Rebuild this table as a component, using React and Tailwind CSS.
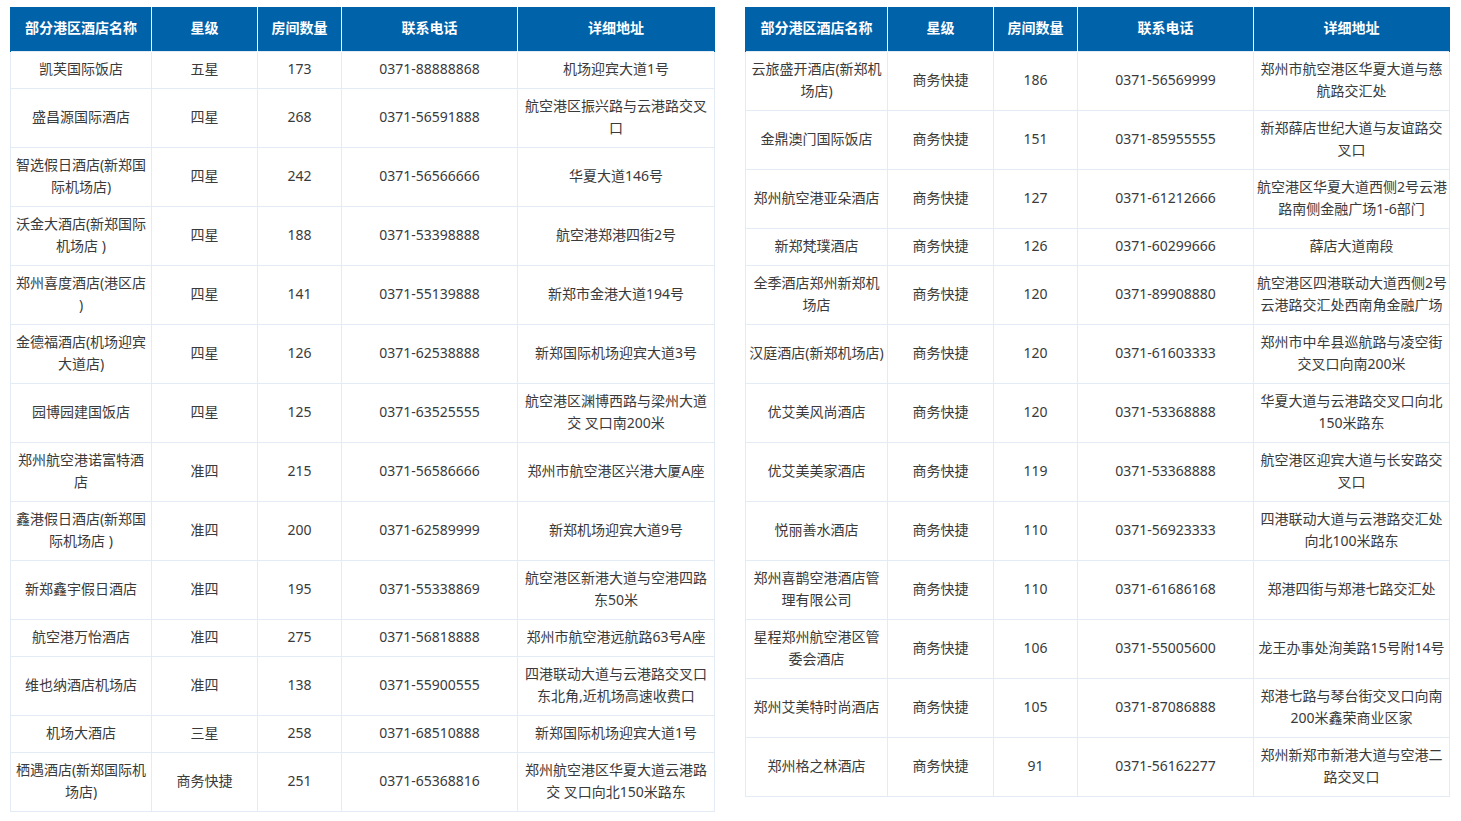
import React from 'react';

const leftRows = [
  ['凯芙国际饭店', '五星', '173', '0371-88888868', '机场迎宾大道1号'],
  ['盛昌源国际酒店', '四星', '268', '0371-56591888', '航空港区振兴路与云港路交叉\n口'],
  ['智选假日酒店(新郑国\n际机场店)', '四星', '242', '0371-56566666', '华夏大道146号'],
  ['沃金大酒店(新郑国际\n机场店 )', '四星', '188', '0371-53398888', '航空港郑港四街2号'],
  ['郑州喜度酒店(港区店\n)', '四星', '141', '0371-55139888', '新郑市金港大道194号'],
  ['金德福酒店(机场迎宾\n大道店)', '四星', '126', '0371-62538888', '新郑国际机场迎宾大道3号'],
  ['园博园建国饭店', '四星', '125', '0371-63525555', '航空港区渊博西路与梁州大道\n交 叉口南200米'],
  ['郑州航空港诺富特酒\n店', '准四', '215', '0371-56586666', '郑州市航空港区兴港大厦A座'],
  ['鑫港假日酒店(新郑国\n际机场店 )', '准四', '200', '0371-62589999', '新郑机场迎宾大道9号'],
  ['新郑鑫宇假日酒店', '准四', '195', '0371-55338869', '航空港区新港大道与空港四路\n东50米'],
  ['航空港万怡酒店', '准四', '275', '0371-56818888', '郑州市航空港远航路63号A座'],
  ['维也纳酒店机场店', '准四', '138', '0371-55900555', '四港联动大道与云港路交叉口\n东北角,近机场高速收费口'],
  ['机场大酒店', '三星', '258', '0371-68510888', '新郑国际机场迎宾大道1号'],
  ['栖遇酒店(新郑国际机\n场店)', '商务快捷', '251', '0371-65368816', '郑州航空港区华夏大道云港路\n交 叉口向北150米路东'],
];

const rightRows = [
  ['云旅盛开酒店(新郑机\n场店)', '商务快捷', '186', '0371-56569999', '郑州市航空港区华夏大道与慈\n航路交汇处'],
  ['金鼎澳门国际饭店', '商务快捷', '151', '0371-85955555', '新郑薛店世纪大道与友谊路交\n叉口'],
  ['郑州航空港亚朵酒店', '商务快捷', '127', '0371-61212666', '航空港区华夏大道西侧2号云港\n路南侧金融广场1-6部门'],
  ['新郑梵璞酒店', '商务快捷', '126', '0371-60299666', '薛店大道南段'],
  ['全季酒店郑州新郑机\n场店', '商务快捷', '120', '0371-89908880', '航空港区四港联动大道西侧2号\n云港路交汇处西南角金融广场'],
  ['汉庭酒店(新郑机场店)', '商务快捷', '120', '0371-61603333', '郑州市中牟县巡航路与凌空街\n交叉口向南200米'],
  ['优艾美风尚酒店', '商务快捷', '120', '0371-53368888', '华夏大道与云港路交叉口向北\n150米路东'],
  ['优艾美美家酒店', '商务快捷', '119', '0371-53368888', '航空港区迎宾大道与长安路交\n叉口'],
  ['悦丽善水酒店', '商务快捷', '110', '0371-56923333', '四港联动大道与云港路交汇处\n向北100米路东'],
  ['郑州喜鹊空港酒店管\n理有限公司', '商务快捷', '110', '0371-61686168', '郑港四街与郑港七路交汇处'],
  ['星程郑州航空港区管\n委会酒店', '商务快捷', '106', '0371-55005600', '龙王办事处洵美路15号附14号'],
  ['郑州艾美特时尚酒店', '商务快捷', '105', '0371-87086888', '郑港七路与琴台街交叉口向南\n200米鑫荣商业区家'],
  ['郑州格之林酒店', '商务快捷', '91', '0371-56162277', '郑州新郑市新港大道与空港二\n路交叉口'],
];

const headers = ['部分港区酒店名称', '星级', '房间数量', '联系电话', '详细地址'];

const HotelTable = ({ rows, widths }) => (
  <table className="table-fixed border-collapse w-[704px] shrink-0">
    <colgroup>
      {widths.map((w, i) => (
        <col key={i} style={{ width: w }} />
      ))}
    </colgroup>
    <thead>
      <tr>
        {headers.map((h) => (
          <th
            key={h}
            className="bg-[#0062a8] text-white font-bold text-[14px] leading-[22px] pt-[10px] pb-[12px] px-[3px] border-x border-x-white first:border-l-[#0062a8] last:border-r-[#0062a8] text-center"
          >
            {h}
          </th>
        ))}
      </tr>
    </thead>
    <tbody>
      {rows.map((r, i) => (
        <tr key={i}>
          {r.map((c, j) => (
            <td
              key={j}
              className="border border-[#e3ecf4] text-center text-[#3a3a3a] text-[14px] leading-[22px] pt-[6px] pb-[8px] px-[3px] whitespace-pre"
            >
              {c}
            </td>
          ))}
        </tr>
      ))}
    </tbody>
  </table>
);

export default function App() {
  return (
    <div
      className="min-h-screen bg-white pt-[7px] pl-[10px] flex items-start gap-[30px]"
      style={{ fontFamily: '"Noto Sans", "Noto Sans CJK SC", sans-serif' }}
    >
      <HotelTable rows={leftRows} widths={[141, 106, 84, 176, 197]} />
      <HotelTable rows={rightRows} widths={[142, 106, 84, 176, 196]} />
    </div>
  );
}
